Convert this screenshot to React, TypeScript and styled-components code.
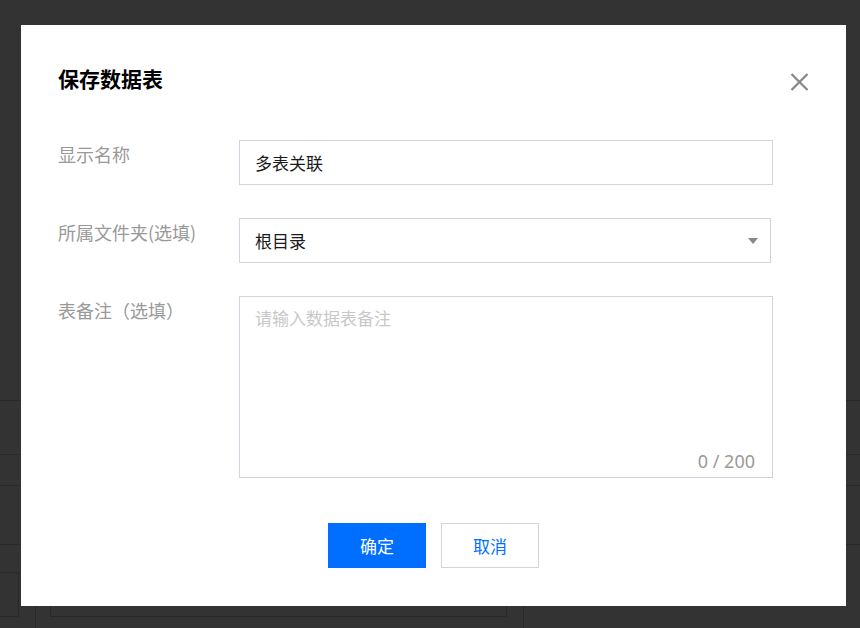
import React from "react";
import styled, { createGlobalStyle } from "styled-components";

const GlobalStyle = createGlobalStyle`
  html, body {
    margin: 0;
    padding: 0;
    background: #333333;
    overflow: hidden;
  }
  body {
    font-family: "Noto Sans CJK SC", "Noto Sans", "Liberation Sans", sans-serif;
  }
  * { box-sizing: border-box; }
`;

const LINE = "#292929";

const BgPage = styled.div`
  width: 860px;
  height: 628px;
  display: flex;
  flex-direction: column;
`;

const BgRow = styled.div<{ $h: number }>`
  height: ${(p) => p.$h}px;
  border-bottom: 1px solid ${LINE};
  box-sizing: content-box;
`;

const BgFooter = styled.div`
  margin-top: 27px;
  flex: 1;
  display: flex;
  align-items: flex-start;
`;

const BgBox = styled.div<{ $w: number }>`
  width: ${(p) => p.$w}px;
  height: 45px;
  border: 1px solid ${LINE};
`;

const BgDivider = styled.div<{ $ml: number }>`
  margin-left: ${(p) => p.$ml}px;
  align-self: stretch;
  width: 1px;
  background: ${LINE};
`;

const Modal = styled.div`
  position: fixed;
  left: 21px;
  top: 25px;
  width: 825px;
  height: 581px;
  background: #ffffff;
  padding: 40px 0 38px 0;
  display: flex;
  flex-direction: column;
`;

const Header = styled.div`
  padding-left: 37px;
`;

const Title = styled.h2`
  margin: 0;
  font-size: 21px;
  line-height: 27px;
  font-weight: 700;
  color: #000000;
`;

const CloseButton = styled.button`
  position: absolute;
  top: 47px;
  right: 37px;
  width: 20px;
  height: 20px;
  padding: 0;
  border: none;
  background: transparent;
  display: flex;
  align-items: center;
  justify-content: center;
  cursor: pointer;
`;

const Form = styled.div`
  margin-top: 48px;
  padding-left: 37px;
  display: grid;
  grid-template-columns: 181px 534px;
  row-gap: 33px;
`;

const Label = styled.div`
  font-size: 18px;
  line-height: 28px;
  color: #999999;
  white-space: nowrap;
`;

const Field = styled.div<{ $w?: number }>`
  width: ${(p) => p.$w ?? 534}px;
  height: 45px;
  border: 1px solid #cfd5de;
  display: flex;
  align-items: center;
  justify-content: space-between;
  padding: 0 12px 0 15px;
  font-size: 17px;
  color: #1a1a1a;
  background: #fff;
`;

const TextArea = styled.div`
  width: 534px;
  height: 182px;
  border: 1px solid #cfd5de;
  padding: 8px 17px 3px 15px;
  display: flex;
  flex-direction: column;
  justify-content: space-between;
  font-size: 17px;
  line-height: 25px;
`;

const Placeholder = styled.div`
  color: #c8c8c8;
`;

const Counter = styled.div`
  align-self: flex-end;
  color: #999999;
  font-family: "Noto Sans", "Liberation Sans", sans-serif;
  font-size: 18px;
`;

const Footer = styled.div`
  margin-top: 45px;
  display: flex;
  justify-content: center;
  gap: 15px;
`;

const Button = styled.button<{ $primary?: boolean }>`
  width: 98px;
  height: 45px;
  font-family: inherit;
  font-size: 17px;
  border: 1px solid ${(p) => (p.$primary ? "#006eff" : "#cfd5de")};
  background: ${(p) => (p.$primary ? "#006eff" : "#ffffff")};
  color: ${(p) => (p.$primary ? "#ffffff" : "#006eff")};
  cursor: pointer;
  padding: 0;
`;

export default function App() {
  return (
    <>
      <GlobalStyle />
      <BgPage>
        <BgRow $h={400} />
        <BgRow $h={53} />
        <BgRow $h={30} />
        <BgRow $h={58} />
        <BgFooter>
          <BgBox $w={20} style={{ marginLeft: -1 }} />
          <BgDivider $ml={16} />
          <BgBox $w={457} style={{ marginLeft: 14 }} />
          <BgDivider $ml={16} />
        </BgFooter>
      </BgPage>
      <Modal>
        <Header>
          <Title>保存数据表</Title>
        </Header>
        <CloseButton aria-label="关闭">
          <svg width="19" height="18" viewBox="0 0 19 18">
            <path d="M1.5 1 L17.5 17 M17.5 1 L1.5 17" stroke="#888888" strokeWidth="2.3" strokeLinecap="butt" />
          </svg>
        </CloseButton>
        <Form>
          <Label>显示名称</Label>
          <Field>多表关联</Field>
          <Label>所属文件夹(选填)</Label>
          <Field $w={532}>
            <span>根目录</span>
            <svg width="10" height="6" viewBox="0 0 10 6">
              <polygon points="0,0 10,0 5,6" fill="#888888" />
            </svg>
          </Field>
          <Label>表备注（选填）</Label>
          <TextArea>
            <Placeholder>请输入数据表备注</Placeholder>
            <Counter>0 / 200</Counter>
          </TextArea>
        </Form>
        <Footer>
          <Button $primary>确定</Button>
          <Button>取消</Button>
        </Footer>
      </Modal>
    </>
  );
}
